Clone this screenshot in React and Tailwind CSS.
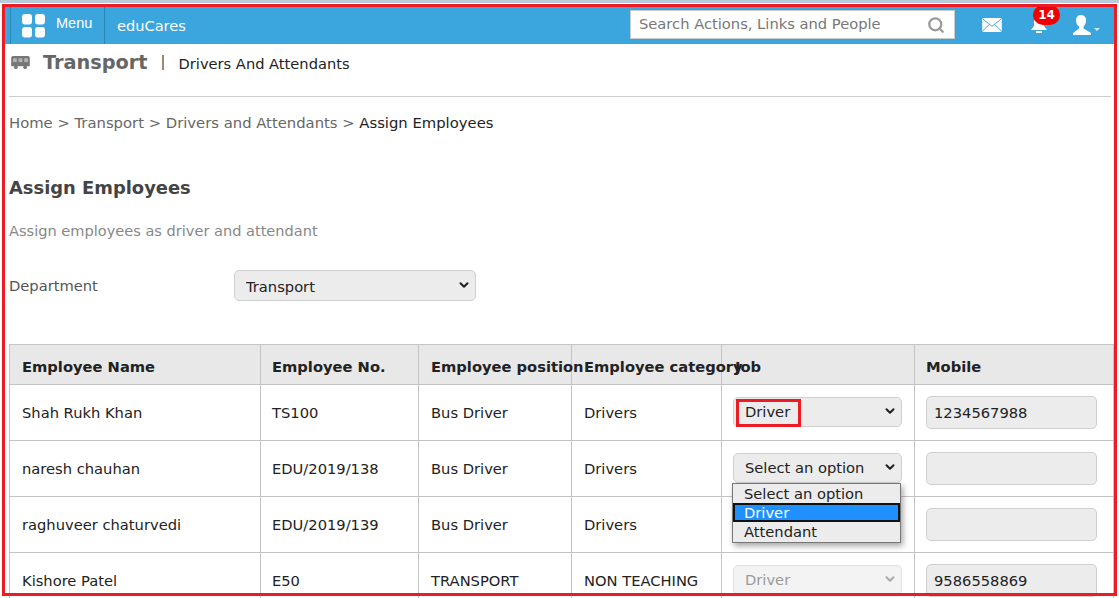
import { ChevronDown, Search } from "lucide-react";

const rows = [
    { name: "Shah Rukh Khan", no: "TS100", position: "Bus Driver", category: "Drivers", job: "Driver", mobile: "1234567988", marked: true },
    { name: "naresh chauhan", no: "EDU/2019/138", position: "Bus Driver", category: "Drivers", job: "Select an option", mobile: "", open: true },
    { name: "raghuveer chaturvedi", no: "EDU/2019/139", position: "Bus Driver", category: "Drivers", job: "", mobile: "" },
    { name: "Kishore Patel", no: "E50", position: "TRANSPORT", category: "NON TEACHING", job: "Driver", mobile: "9586558869", disabled: true },
];

const JobSelect = ({ row }) => {
    if (!row.job) return <div className="h-[30px]"></div>;
    return (
        <div className="relative w-[169px]">
            <select
                value={row.job}
                disabled={row.disabled}
                onChange={() => {}}
                className={`appearance-none w-full h-[30px] pl-[11px] rounded-[5px] border text-[14.7px] ${row.disabled ? "bg-[#f3f3f3] text-[#9a9a9a] border-[#e0e0e0]" : "bg-[#ececec] text-[#222] border-[#cfcfcf]"}`}
            >
                <option>Select an option</option>
                <option>Driver</option>
                <option>Attendant</option>
            </select>
            <ChevronDown size={14} strokeWidth={3.5} className={`absolute right-[5px] top-[7px] pointer-events-none ${row.disabled ? "text-[#aaa]" : "text-[#222]"}`} />
            {row.marked && (
                <div className="absolute left-[3px] top-[2px] w-[65px] h-[28px] border-[3px] border-[#ed1c24]"></div>
            )}
            {row.open && (
                <div className="absolute left-[-1px] top-[30px] z-10 w-[169px] h-[60px] bg-[#ececec] border border-[#767676] shadow-[2px_3px_6px_rgba(0,0,0,0.35)] text-[14.7px] leading-[19px] text-[#222]">
                    <div className="pl-[11px] h-[19px]">Select an option</div>
                    <div className="pl-[11px] h-[19px] bg-[#1e90ff] text-white outline-2 -outline-offset-2 outline-[#111]">Driver</div>
                    <div className="pl-[11px] h-[19px]">Attendant</div>
                </div>
            )}
        </div>
    );
};

const App = () => {
    return (
        <div className="relative w-[1119px] h-[598px] overflow-hidden bg-white text-[#333] font-['DejaVu_Sans',sans-serif] text-[14.7px]">
            <div className="h-[7px] bg-white border-t-[3px] border-[#b9cbd8]"></div>

            <header className="mx-[5px] h-[37px] w-[1110px] bg-[#3aa6dd] flex items-center text-white">
                <div className="ml-[5px] h-full flex items-center border-x border-[#2b86b8] w-[95px]">
                    <svg width="24" height="24" viewBox="0 0 24 24" className="ml-[11px] fill-white">
                        <rect x="0" y="0" width="10" height="10.5" rx="3" />
                        <rect x="13" y="0" width="10" height="10.5" rx="3" />
                        <rect x="0" y="13" width="10" height="10.5" rx="3" />
                        <rect x="13" y="13" width="10" height="10.5" rx="3" />
                    </svg>
                    <span className="ml-[10px] text-[14.5px] font-['Liberation_Sans',sans-serif] mb-[4px]">Menu</span>
                </div>
                <span className="ml-[12px] text-[14.6px]">eduCares</span>

                <div className="ml-auto mr-[27px] mb-[2px] w-[325px] h-[29px] bg-white border border-[#c9c9c9] flex items-center px-2 text-[#777]">
                    <span className="text-[14.7px] whitespace-nowrap">Search Actions, Links and People</span>
                    <Search size={18} strokeWidth={3} className="ml-auto mr-[1px] text-[#999]" />
                </div>
                <svg width="20" height="14" viewBox="0 0 21 15" className="mr-[28px] mb-[2px] shrink-0">
                    <rect width="21" height="15" rx="1.5" fill="#fff" />
                    <path d="M0.5 1 L10.5 9 L20.5 1 M0.5 14 L7.5 7 M20.5 14 L13.5 7" fill="none" stroke="#3aa6dd" strokeWidth="1" />
                </svg>
                <div className="relative mr-[25px] mb-[2px] w-[18px] h-[18px] shrink-0">
                    <svg width="18" height="18" viewBox="0 0 18 18" className="fill-white">
                        <path d="M9 1 C5 1 4 4 4 7 L4 10 L1 14 L17 14 L14 10 L14 7 C14 4 13 1 9 1 Z" />
                        <rect x="6" y="15" width="6" height="2" />
                    </svg>
                    <span className="absolute left-[3px] top-[-11px] w-[27px] h-[20px] rounded-full bg-[#f00000] text-white text-[12px] font-bold flex items-center justify-center">14</span>
                </div>
                <svg width="28" height="20" viewBox="0 0 28 20" className="mr-[14px] mb-[2px] shrink-0 fill-white">
                    <path d="M8 0 C12 0 13.5 3 13 6.5 C12.7 9 11.5 10.5 10.5 11.5 L10.5 13.5 L18 18 L18 20 L0 20 L0 18 L6 13.5 L6 11.5 C4.5 10.5 3.5 9 3.2 6.5 C2.7 3 4 0 8 0 Z" />
                    <path d="M21 13 L27 13 L24 16 Z" fill="#d6ecf8" />
                </svg>
            </header>

            <div className="pl-[9px] pr-[8px]">
                <div className="h-[53px] flex items-start border-b border-[#cfcfcf]">
                    <div className="flex items-center h-[36px] w-full">
                        <svg width="19" height="13" viewBox="0 0 20 14" className="ml-[2px] fill-[#777]">
                            <path d="M2 0 H18 A2 2 0 0 1 20 2 V11 H0 V2 A2 2 0 0 1 2 0 Z" />
                            <rect x="2" y="2.5" width="4" height="4" fill="#b5b5b5" />
                            <rect x="8" y="2.5" width="4" height="4" fill="#b5b5b5" />
                            <rect x="14" y="2.5" width="4" height="4" fill="#b5b5b5" />
                            <circle cx="5" cy="12" r="2" />
                            <circle cx="15" cy="12" r="2" />
                        </svg>
                        <span className="ml-[13px] mt-[3px] text-[19.3px] font-bold text-[#666]">Transport</span>
                        <span className="ml-[14px] w-[2px] h-[15px] bg-[#a9846a]"></span>
                        <span className="ml-[15px] text-[14.65px] text-[#222] mt-[3px]">Drivers And Attendants</span>
                    </div>
                </div>

                <div className="mt-[15px] text-[14.8px] text-[#666] whitespace-nowrap">
                    Home &gt; Transport &gt; Drivers and Attendants &gt; <span className="text-[#222]">Assign Employees</span>
                </div>

                <h2 className="mt-[41px] text-[17.9px] font-bold text-[#444]">Assign Employees</h2>
                <p className="mt-[18px] text-[14.57px] text-[#888]">Assign employees as driver and attendant</p>

                <div className="mt-[28px] flex items-center h-[32px]">
                    <span className="w-[225px] text-[14.7px] text-[#555]">Department</span>
                    <div className="relative w-[242px]">
                        <select
                            value="Transport"
                            onChange={() => {}}
                            className="appearance-none w-full h-[31px] pl-[11px] pt-[2px] rounded-[5px] border border-[#cfcfcf] bg-[#ececec] text-[14.7px] text-[#222]"
                        >
                            <option>Transport</option>
                        </select>
                        <ChevronDown size={14} strokeWidth={3.5} className="absolute right-[5px] top-[8px] text-[#222] pointer-events-none" />
                    </div>
                </div>

                <table className="mt-[42px] w-[1104px] table-fixed border-collapse text-[14.7px] text-[#222]">
                    <colgroup>
                        <col className="w-[251px]" />
                        <col className="w-[158px]" />
                        <col className="w-[153px]" />
                        <col className="w-[150px]" />
                        <col className="w-[193px]" />
                        <col className="w-[199px]" />
                    </colgroup>
                    <thead>
                        <tr className="h-[40px] bg-[#e8e8e8] font-bold text-left whitespace-nowrap">
                            <th className="pl-[12px] pt-[5px] border border-[#c4c4c4]">Employee Name</th>
                            <th className="pl-[11px] pt-[5px] border border-[#c4c4c4]">Employee No.</th>
                            <th className="pl-[12px] pt-[5px] border border-[#c4c4c4]">Employee position</th>
                            <th className="pl-[12px] pt-[5px] border border-[#c4c4c4]">Employee category</th>
                            <th className="pl-[13px] pt-[5px] border border-[#c4c4c4]">Job</th>
                            <th className="pl-[11px] pt-[5px] border border-[#c4c4c4]">Mobile</th>
                        </tr>
                    </thead>
                    <tbody>
                        {rows.map((row) => (
                            <tr key={row.name} className="h-[56px]">
                                <td className="pl-[12px] pt-[1px] border border-[#c4c4c4]">{row.name}</td>
                                <td className="pl-[11px] pt-[1px] border border-[#c4c4c4]">{row.no}</td>
                                <td className="pl-[12px] pt-[1px] border border-[#c4c4c4]">{row.position}</td>
                                <td className="pl-[12px] pt-[1px] border border-[#c4c4c4]">{row.category}</td>
                                <td className="pl-[11px] border border-[#c4c4c4]"><JobSelect row={row} /></td>
                                <td className="pl-[11px] border border-[#c4c4c4]">
                                    <div className="w-[171px] h-[33px] rounded-[5px] border border-[#cfcfcf] bg-[#ececec] px-[7px] leading-[31px]">{row.mobile}</div>
                                </td>
                            </tr>
                        ))}
                    </tbody>
                </table>
            </div>

            <div className="absolute left-[2px] top-[4px] w-[1115px] h-[592px] border-[3px] border-[#ed1c24] pointer-events-none z-20"></div>
        </div>
    );
};

export default App;
